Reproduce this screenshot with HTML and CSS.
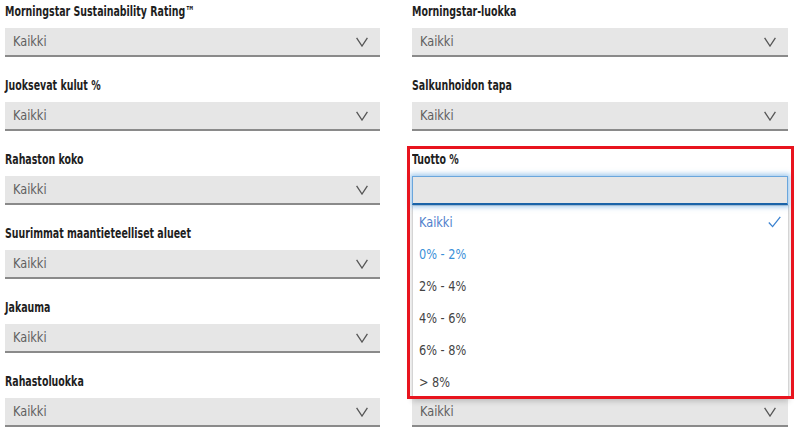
FILE: index.html
```html
<!DOCTYPE html>
<html lang="fi">
<head>
<meta charset="utf-8">
<title>Suodattimet</title>
<link rel="stylesheet" href="styles.css">
</head>
<body>
<div class="filters">
  <div class="col">
    <div class="field">
      <div class="label"><span>Morningstar Sustainability Rating™</span></div>
      <div class="select"><span class="value">Kaikki</span><svg class="chev" width="12" height="10" viewBox="0 0 12 10"><path d="M0.6 0.8 L6 9 L11.4 0.8" fill="none" stroke="#555" stroke-width="1.3"/></svg></div>
    </div>
    <div class="field">
      <div class="label"><span>Juoksevat kulut %</span></div>
      <div class="select"><span class="value">Kaikki</span><svg class="chev" width="12" height="10" viewBox="0 0 12 10"><path d="M0.6 0.8 L6 9 L11.4 0.8" fill="none" stroke="#555" stroke-width="1.3"/></svg></div>
    </div>
    <div class="field">
      <div class="label"><span>Rahaston koko</span></div>
      <div class="select"><span class="value">Kaikki</span><svg class="chev" width="12" height="10" viewBox="0 0 12 10"><path d="M0.6 0.8 L6 9 L11.4 0.8" fill="none" stroke="#555" stroke-width="1.3"/></svg></div>
    </div>
    <div class="field">
      <div class="label"><span>Suurimmat maantieteelliset alueet</span></div>
      <div class="select"><span class="value">Kaikki</span><svg class="chev" width="12" height="10" viewBox="0 0 12 10"><path d="M0.6 0.8 L6 9 L11.4 0.8" fill="none" stroke="#555" stroke-width="1.3"/></svg></div>
    </div>
    <div class="field">
      <div class="label"><span>Jakauma</span></div>
      <div class="select"><span class="value">Kaikki</span><svg class="chev" width="12" height="10" viewBox="0 0 12 10"><path d="M0.6 0.8 L6 9 L11.4 0.8" fill="none" stroke="#555" stroke-width="1.3"/></svg></div>
    </div>
    <div class="field">
      <div class="label"><span>Rahastoluokka</span></div>
      <div class="select"><span class="value">Kaikki</span><svg class="chev" width="12" height="10" viewBox="0 0 12 10"><path d="M0.6 0.8 L6 9 L11.4 0.8" fill="none" stroke="#555" stroke-width="1.3"/></svg></div>
    </div>
  </div>
  <div class="col">
    <div class="field">
      <div class="label"><span>Morningstar-luokka</span></div>
      <div class="select"><span class="value">Kaikki</span><svg class="chev" width="12" height="10" viewBox="0 0 12 10"><path d="M0.6 0.8 L6 9 L11.4 0.8" fill="none" stroke="#555" stroke-width="1.3"/></svg></div>
    </div>
    <div class="field">
      <div class="label"><span>Salkunhoidon tapa</span></div>
      <div class="select"><span class="value">Kaikki</span><svg class="chev" width="12" height="10" viewBox="0 0 12 10"><path d="M0.6 0.8 L6 9 L11.4 0.8" fill="none" stroke="#555" stroke-width="1.3"/></svg></div>
    </div>
    <div class="field open">
      <div class="label"><span>Tuotto %</span></div>
      <div class="select focused"></div>
      <ul class="menu">
        <li class="opt selected"><span class="txt">Kaikki</span><svg class="check" width="13" height="12" viewBox="0 0 13 12"><path d="M0.8 6.5 L4.6 10.6 L12.3 0.8" fill="none" stroke="#3b82d0" stroke-width="1.3"/></svg></li>
        <li class="opt hover"><span class="txt">0% - 2%</span></li>
        <li class="opt"><span class="txt">2% - 4%</span></li>
        <li class="opt"><span class="txt">4% - 6%</span></li>
        <li class="opt"><span class="txt">6% - 8%</span></li>
        <li class="opt"><span class="txt">&gt; 8%</span></li>
      </ul>
      <div class="highlight"></div>
    </div>
    <div class="field">
      <div class="label"></div>
      <div class="select"></div>
    </div>
    <div class="field">
      <div class="label"></div>
      <div class="select"></div>
    </div>
    <div class="field">
      <div class="label"></div>
      <div class="select"><span class="value">Kaikki</span><svg class="chev" width="12" height="10" viewBox="0 0 12 10"><path d="M0.6 0.8 L6 9 L11.4 0.8" fill="none" stroke="#555" stroke-width="1.3"/></svg></div>
    </div>
  </div>
</div>
</body>
</html>
```
FILE: styles.css
```css
html, body {
  margin: 0;
  padding: 0;
  background: #ffffff;
}
body {
  width: 798px;
  height: 432px;
  overflow: hidden;
  font-family: "DejaVu Sans Condensed", "DejaVu Sans", sans-serif;
}
.filters {
  display: grid;
  grid-template-columns: 375px 376px;
  column-gap: 32px;
  padding-left: 5px;
}
.col {
  display: flex;
  flex-direction: column;
  gap: 17px;
}
.field {
  position: relative;
  display: flex;
  flex-direction: column;
}
.label {
  height: 28px;
  line-height: 22px;
  font-size: 14px;
  font-weight: bold;
  color: #1e1e1e;
  white-space: nowrap;
}
.label span {
  display: inline-block;
  transform: scaleX(0.75);
  transform-origin: 0 50%;
}
.select {
  box-sizing: border-box;
  height: 29px;
  background: #e6e6e6;
  border-bottom: 2px solid #8a8a8a;
  display: flex;
  align-items: center;
  justify-content: space-between;
  padding: 0 12px 0 8px;
}
.value {
  display: inline-block;
  font-size: 14px;
  color: #5f5f5f;
  line-height: 27px;
  transform: scaleX(0.9);
  transform-origin: 0 50%;
}
.chev {
  display: block;
  margin-top: 1px;
}
.select.focused {
  border: 1px solid #6aa6dc;
  border-bottom: 2px solid #1a63a8;
  box-shadow: 0 0 5px 2px rgba(70, 150, 220, 0.5);
  position: relative;
  z-index: 2;
}
.menu {
  position: absolute;
  left: 0;
  top: 57px;
  width: 377px;
  margin: 0;
  padding: 0;
  list-style: none;
  background: #ffffff;
  border: 1px solid #d4d4d4;
  box-shadow: 0 2px 6px rgba(0, 0, 0, 0.2);
  box-sizing: border-box;
  z-index: 1;
}
.opt {
  height: 32px;
  line-height: 32px;
  padding: 0 10px 0 6px;
  font-size: 14px;
  color: #444;
  display: flex;
  align-items: center;
  justify-content: space-between;
}
.txt {
  display: inline-block;
  transform: scaleX(0.9);
  transform-origin: 0 50%;
}
.opt.selected {
  color: #5080cc;
}
.opt.hover {
  color: #3a90d8;
}
.check {
  display: block;
  margin-right: -3px;
}
.highlight {
  position: absolute;
  left: -5px;
  top: -2px;
  width: 387px;
  height: 253px;
  box-sizing: border-box;
  border: 3px solid #e8141e;
  z-index: 3;
  pointer-events: none;
}
```
